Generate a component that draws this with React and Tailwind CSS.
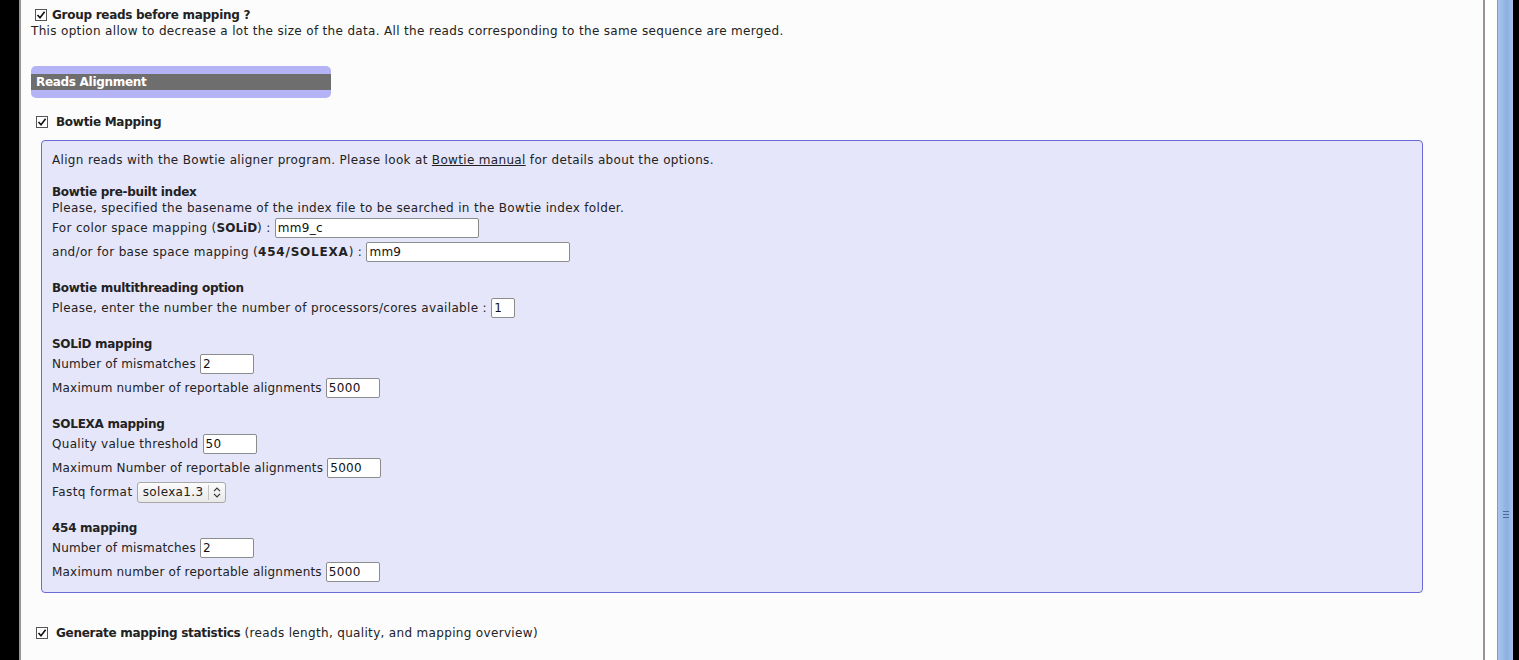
import React from "react";

// small legacy-style checkbox, always ticked
const Check = () => (
  <svg width="12" height="12" viewBox="0 0 12 12" className="shrink-0">
    <rect x="0.5" y="0.5" width="11" height="11" fill="#fff" stroke="#555" />
    <path d="M2.5 6 L5 8.8 L9.6 2.8" fill="none" stroke="#111" strokeWidth="1.6" />
  </svg>
);

const Field = ({ w, value }) => (
  <input
    readOnly
    value={value}
    className={`h-[20px] ${w} border border-[#8c8c8c] rounded-[2px] bg-white px-[2px] text-[12px] tracking-[0.3px] text-[#111] outline-none font-['DejaVu_Sans',sans-serif]`}
  />
);

const Row = ({ label, track = "", children }) => (
  <div className="flex items-center h-[24px]">
    <span className={`whitespace-pre ${track}`}>{label} </span>
    {children}
  </div>
);

const Heading = ({ children }) => (
  <div className="mt-[16px] font-bold tracking-[-0.28px] leading-[16px]">{children}</div>
);

const App = () => {
  return (
    <div className="flex h-[660px] overflow-hidden bg-black text-[12px] leading-[16px] tracking-[0.33px] text-[#222] font-['DejaVu_Sans','Verdana',sans-serif]">
      <div className="w-[19px] shrink-0 bg-black" />

      {/* page body */}
      <div className="flex-1 border-l-2 border-r-2 border-[#9b9494] bg-[#fcfcfc] pl-[10px] pt-[7px]">
        <div className="flex items-center h-[16px]">
          <span className="ml-[4px] mr-[5px]">
            <Check />
          </span>
          <span className="font-bold tracking-[-0.28px]">Group reads before mapping ?</span>
        </div>
        <div>
          This option allow to decrease a lot the size of the data. All the reads corresponding to the same sequence are merged.
        </div>

        {/* section title */}
        <div className="mt-[27px] w-[300px] rounded-[5px] bg-[#b3b3f6] py-[8px]">
          <div className="bg-[#6e6e6e] pl-[5px] font-bold tracking-[-0.3px] text-white leading-[16px]">
            Reads Alignment
          </div>
        </div>

        <div className="mt-[16px] flex items-center h-[16px]">
          <span className="ml-[5px] mr-[8px]">
            <Check />
          </span>
          <span className="font-bold tracking-[-0.28px]">Bowtie Mapping</span>
        </div>

        {/* bowtie options */}
        <div className="mt-[10px] ml-[10px] w-[1382px] rounded-[4px] border border-[#6b6bd8] bg-[#e6e6fa] px-[10px] pt-[11px] pb-[8px]">
          <div>
            Align reads with the Bowtie aligner program. Please look at{" "}
            <span className="underline">Bowtie manual</span> for details about the options.
          </div>

          <Heading>Bowtie pre-built index</Heading>
          <div>Please, specified the basename of the index file to be searched in the Bowtie index folder.</div>
          <Row
            label={
              <>
                For color space mapping (<b className="tracking-[0px]">SOLiD</b>) :
              </>
            }
          >
            <Field w="w-[204px]" value="mm9_c" />
          </Row>
          <Row
            label={
              <>
                and/or for base space mapping (<b className="tracking-[0.8px]">454/SOLEXA</b>) :
              </>
            }
          >
            <Field w="w-[204px]" value="mm9" />
          </Row>

          <Heading>Bowtie multithreading option</Heading>
          <Row label="Please, enter the number the number of processors/cores available :">
            <Field w="w-[24px]" value="1" />
          </Row>

          <Heading>SOLiD mapping</Heading>
          <Row label="Number of mismatches" track="tracking-[0.18px]">
            <Field w="w-[54px]" value="2" />
          </Row>
          <Row label="Maximum number of reportable alignments" track="tracking-[0.2px]">
            <Field w="w-[54px]" value="5000" />
          </Row>

          <Heading>SOLEXA mapping</Heading>
          <Row label="Quality value threshold" track="tracking-[0.29px]">
            <Field w="w-[54px]" value="50" />
          </Row>
          <Row label="Maximum Number of reportable alignments" track="tracking-[0.2px]">
            <Field w="w-[54px]" value="5000" />
          </Row>
          <Row label="Fastq format" track="tracking-[0.41px]">
            <div className="flex items-center h-[21px] w-[89px] rounded-[3px] border border-[#a8a8a8] bg-[linear-gradient(#fbfbfb,#e9e9e9)]">
              <span className="flex-1 pl-[5px] text-[#222]">solexa1.3</span>
              <span className="h-[15px] border-l border-[#c4c4c4]" />
              <svg width="8" height="11" viewBox="0 0 8 11" className="mx-[4px]">
                <path d="M1 4.2 L4 1.2 L7 4.2 M1 6.8 L4 9.8 L7 6.8" fill="none" stroke="#333" strokeWidth="1.2" />
              </svg>
            </div>
          </Row>

          <Heading>454 mapping</Heading>
          <Row label="Number of mismatches" track="tracking-[0.18px]">
            <Field w="w-[54px]" value="2" />
          </Row>
          <Row label="Maximum number of reportable alignments" track="tracking-[0.2px]">
            <Field w="w-[54px]" value="5000" />
          </Row>
        </div>

        <div className="mt-[32px] flex items-center h-[16px]">
          <span className="ml-[5px] mr-[8px]">
            <Check />
          </span>
          <span>
            <b className="tracking-[-0.28px]">Generate mapping statistics</b> (reads length, quality, and mapping overview)
          </span>
        </div>
      </div>

      <div className="w-[12px] shrink-0 bg-white" />

      {/* scrollbar */}
      <div className="flex w-[16px] shrink-0 flex-col items-center border-l border-[#7c9ccd] bg-[linear-gradient(90deg,#a9c5ee,#8eb0e0_60%,#a3c0ea)]">
        <div className="mt-[511px] flex flex-col gap-[2px]">
          <div className="h-px w-[6px] bg-[#4d6a98]" />
          <div className="h-px w-[6px] bg-[#4d6a98]" />
          <div className="h-px w-[6px] bg-[#4d6a98]" />
        </div>
      </div>

      <div className="w-[6px] shrink-0 bg-black" />
    </div>
  );
};

export default App;
